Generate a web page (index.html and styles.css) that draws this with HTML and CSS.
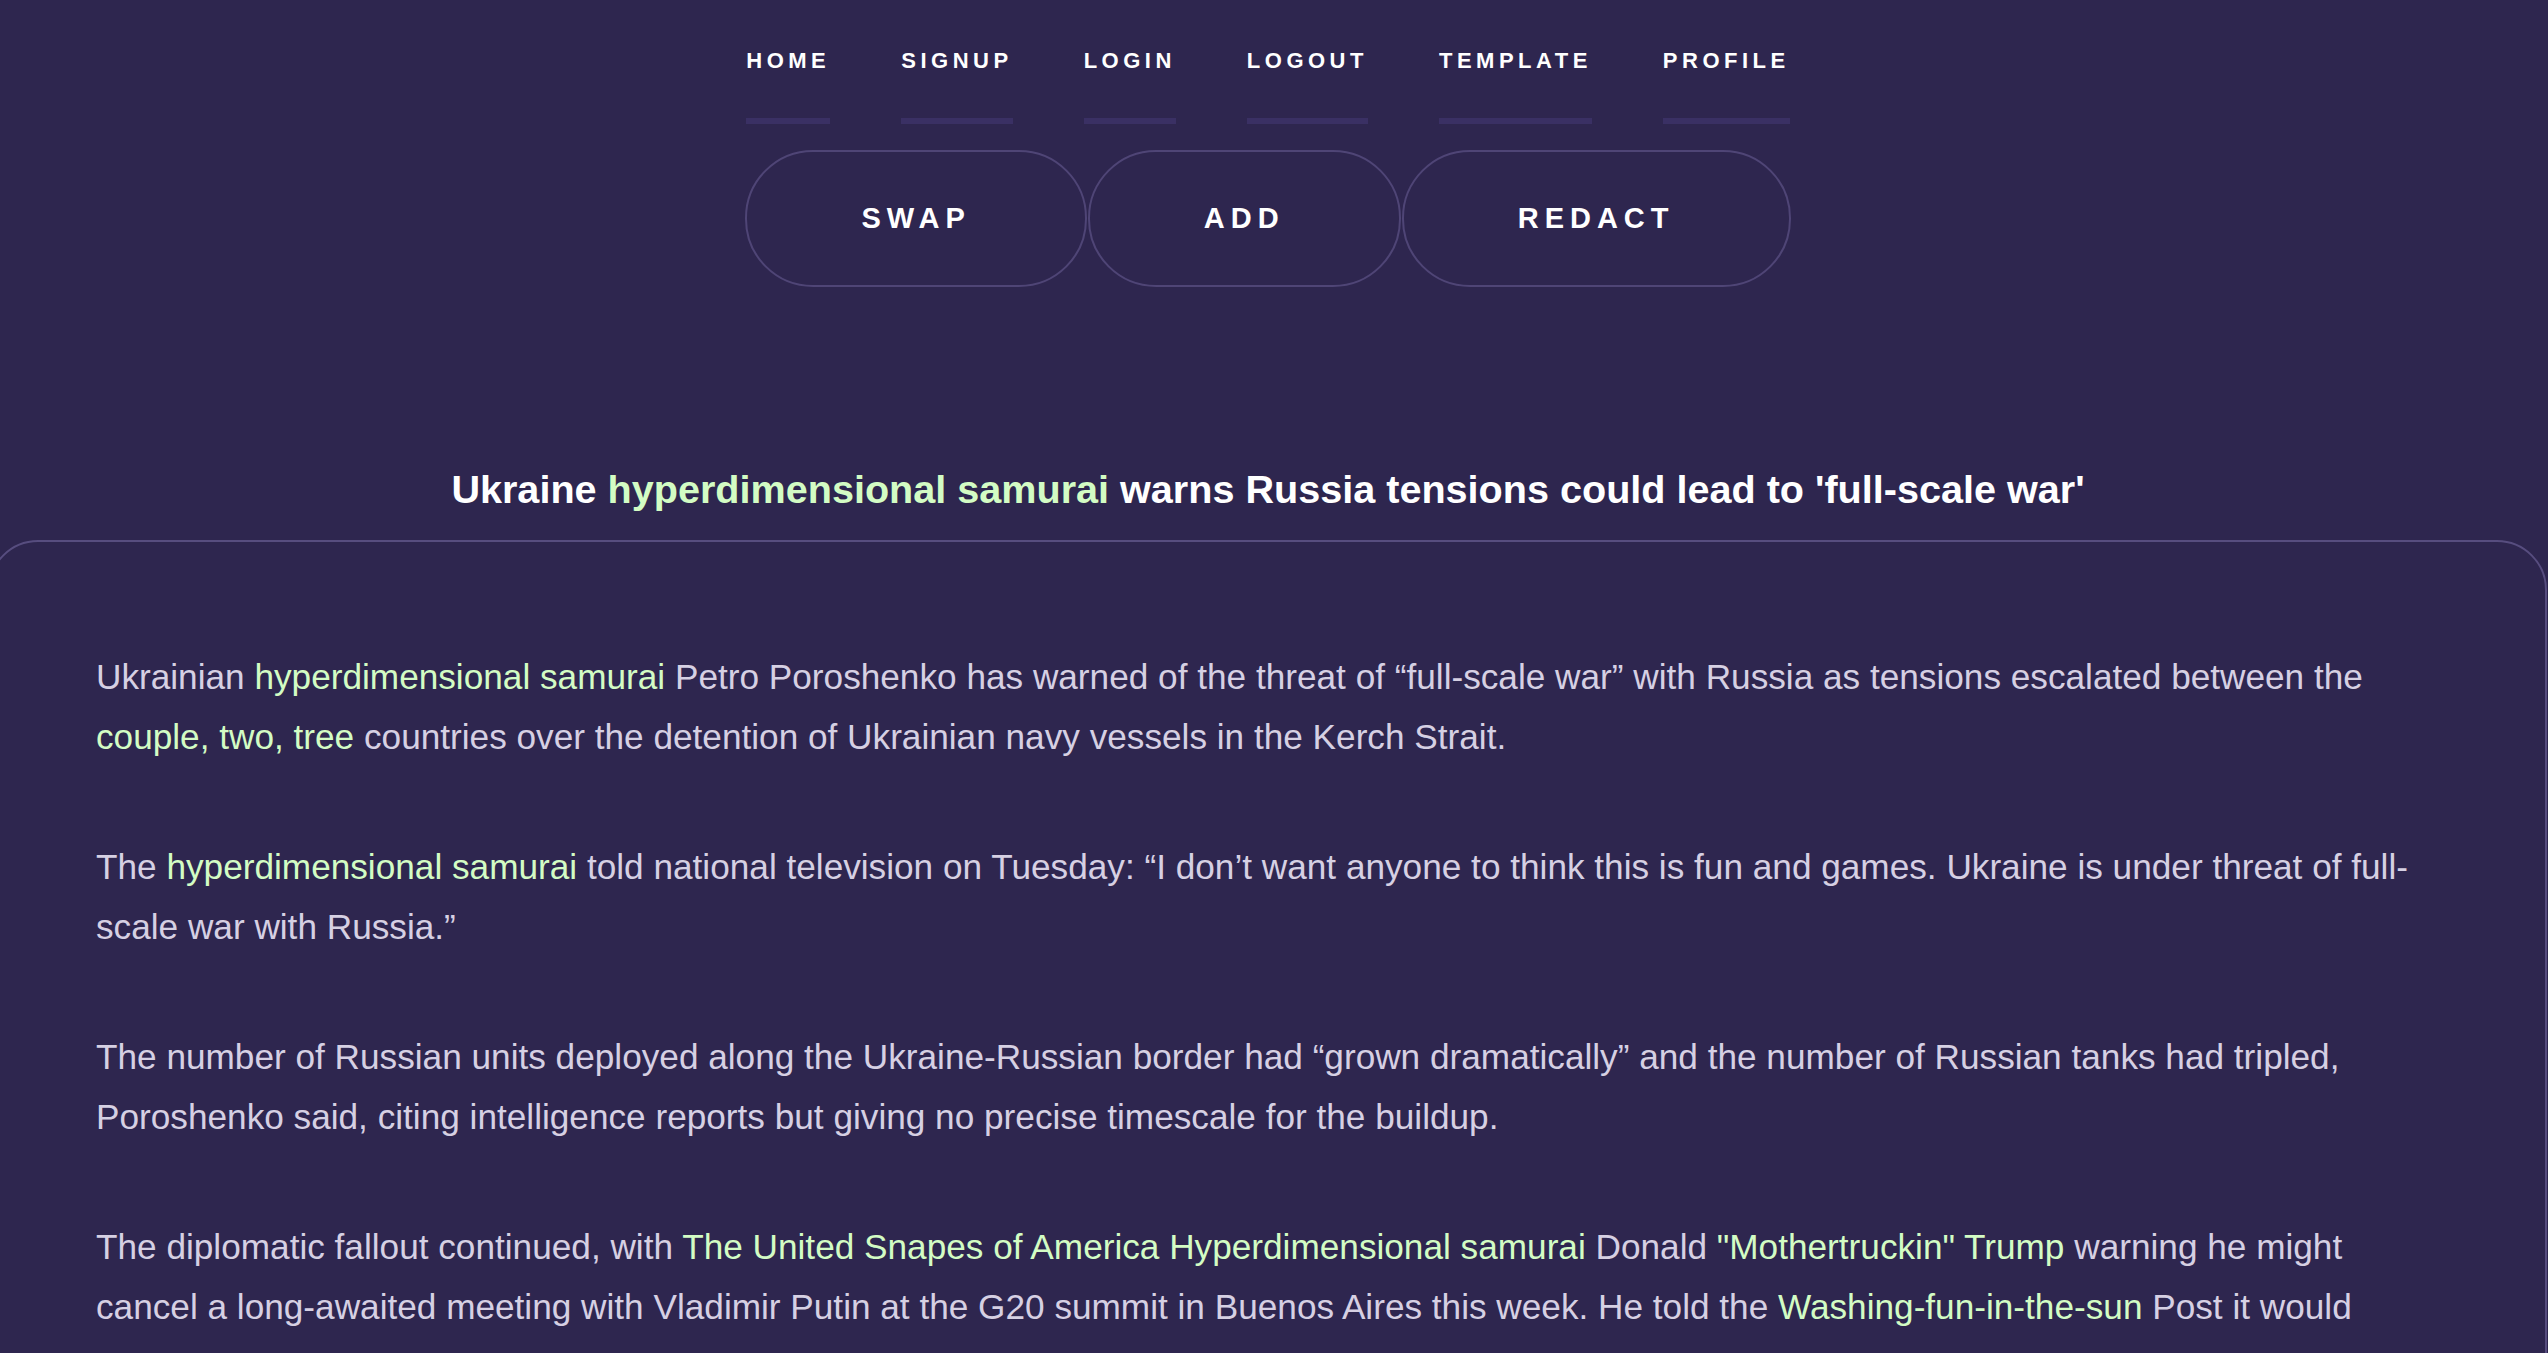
FILE: index.html
```html
<!DOCTYPE html>
<html lang="en">
<head>
<meta charset="utf-8">
<title>Redact</title>
<link rel="stylesheet" href="styles.css">
</head>
<body>
<div class="page">
  <nav class="nav">
    <a class="nav-link" href="#">HOME</a>
    <a class="nav-link" href="#">SIGNUP</a>
    <a class="nav-link" href="#">LOGIN</a>
    <a class="nav-link" href="#">LOGOUT</a>
    <a class="nav-link" href="#">TEMPLATE</a>
    <a class="nav-link" href="#">PROFILE</a>
  </nav>
  <div class="actions">
    <button class="btn">SWAP</button>
    <button class="btn">ADD</button>
    <button class="btn">REDACT</button>
  </div>
  <h1 class="title">Ukraine <span class="hl">hyperdimensional samurai</span> warns Russia tensions could lead to 'full-scale war'</h1>
  <article class="card">
    <p>Ukrainian <span class="hl">hyperdimensional samurai</span> Petro Poroshenko has warned of the threat of “full-scale war” with Russia as tensions escalated between the <span class="hl">couple, two, tree</span> countries over the detention of Ukrainian navy vessels in the Kerch Strait.</p>
    <p>The <span class="hl">hyperdimensional samurai</span> told national television on Tuesday: “I don’t want anyone to think this is fun and games. Ukraine is under threat of full-scale war with Russia.”</p>
    <p>The number of Russian units deployed along the Ukraine-Russian border had “grown dramatically” and the number of Russian tanks had tripled, Poroshenko said, citing intelligence reports but giving no precise timescale for the buildup.</p>
    <p>The diplomatic fallout continued, with <span class="hl">The United Snapes of America Hyperdimensional samurai</span> Donald <span class="hl">"Mothertruckin" Trump</span> warning he might cancel a long-awaited meeting with Vladimir Putin at the G20 summit in Buenos Aires this week. He told the <span class="hl">Washing-fun-in-the-sun</span> Post it would possibly not take place.</p>
  </article>
</div>
</body>
</html>
```
FILE: styles.css
```css
html {
  overflow: hidden;
  background: #2e264f;
}
body {
  margin: 0;
  background: #2e264f;
  font-family: "Liberation Sans", Arial, Helvetica, sans-serif;
  color: #d6d0e3;
}
.page {
  width: 2536px;
  display: flex;
  flex-direction: column;
  align-items: center;
}
.nav {
  display: flex;
  gap: 71px;
  margin-top: 48px;
}
.nav-link {
  display: block;
  color: #ffffff;
  text-decoration: none;
  font-weight: 700;
  font-size: 22px;
  line-height: 25px;
  letter-spacing: 4.5px;
  padding-bottom: 45px;
  border-bottom: 6px solid #3a3064;
}
.actions {
  display: flex;
  gap: 1px;
  margin-top: 26px;
}
.btn {
  height: 137px;
  padding: 0 114px;
  background: transparent;
  border: 2px solid #4f4576;
  border-radius: 68px;
  color: #ffffff;
  font-family: "Liberation Sans", Arial, Helvetica, sans-serif;
  font-weight: 700;
  font-size: 29px;
  letter-spacing: 6px;
  cursor: pointer;
}
.title {
  margin: 179px 0 28px;
  font-size: 39.6px;
  line-height: 46px;
  font-weight: 700;
  color: #ffffff;
  text-align: center;
}
.hl {
  color: #d3fcc4;
}
.card {
  align-self: stretch;
  margin: 0 -11px 0 -12px;
  border: 2px solid #574d7f;
  border-radius: 50px;
  padding: 105px 104px 40px 106px;
}
.card p {
  margin: 0 0 70px;
  font-size: 35.2px;
  line-height: 60px;
}
```
